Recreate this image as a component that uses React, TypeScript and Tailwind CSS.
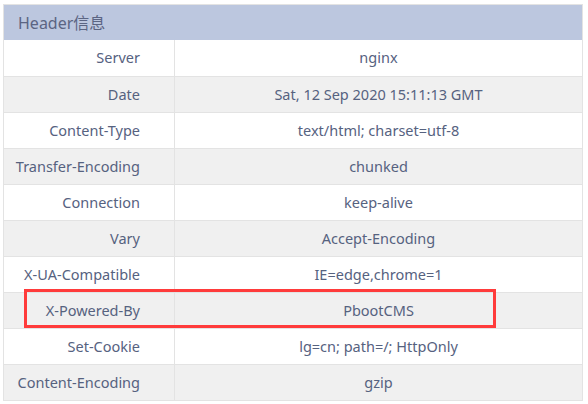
import React from 'react'

const rows = [
  ['Server', 'nginx'],
  ['Date', 'Sat, 12 Sep 2020 15:11:13 GMT'],
  ['Content-Type', 'text/html; charset=utf-8'],
  ['Transfer-Encoding', 'chunked'],
  ['Connection', 'keep-alive'],
  ['Vary', 'Accept-Encoding'],
  ['X-UA-Compatible', 'IE=edge,chrome=1'],
  ['X-Powered-By', 'PbootCMS'],
  ['Set-Cookie', 'lg=cn; path=/; HttpOnly'],
  ['Content-Encoding', 'gzip'],
]

export default function App() {
  return (
    <div className="w-[588px] h-[404px] bg-white pt-[4px] pl-[3px]" style={{ fontFamily: '"Noto Sans", "Noto Sans CJK SC", sans-serif' }}>
      <div className="relative w-[580px] border border-[#e3e3e3] text-[14.5px] text-[#56627f]">
        <div className="h-[35px] bg-[#bcc7df] pl-[14px] flex items-center text-[16px] text-[#5b6583]">
          Header信息
        </div>
        {rows.map(([k, v], i) => (
          <div
            key={k}
            className={`flex h-[36px] ${i > 0 ? 'border-t border-[#e3e3e3]' : ''} ${i % 2 === 1 ? 'bg-[#f0f0f0]' : 'bg-white'}`}
          >
            <div className="w-[171px] shrink-0 flex items-center justify-end pr-[34px] border-r border-[#e3e3e3]">
              {k}
            </div>
            <div className="flex-1 flex items-center justify-center">{v}</div>
          </div>
        ))}
        <div className="absolute left-[20px] top-[284px] w-[472px] h-[39px] border-[3px] border-[#ff3b3b]" />
      </div>
    </div>
  )
}
